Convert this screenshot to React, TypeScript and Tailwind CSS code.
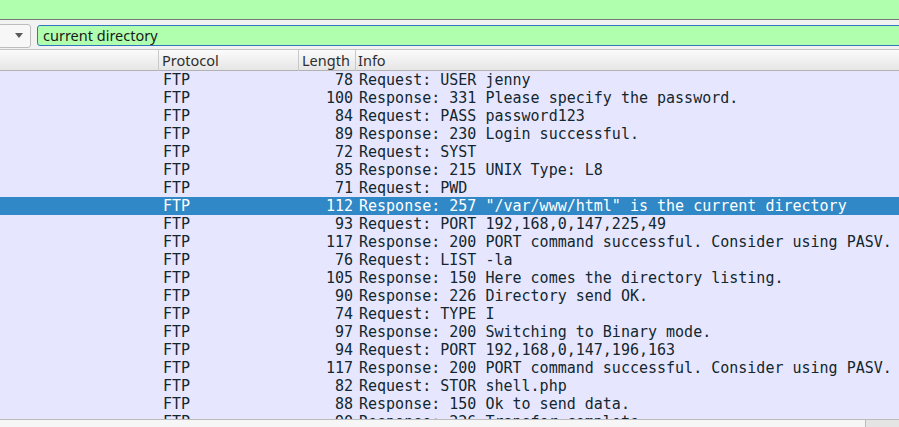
const rows = [
  { len: 78, info: "Request: USER jenny" },
  { len: 100, info: "Response: 331 Please specify the password." },
  { len: 84, info: "Request: PASS password123" },
  { len: 89, info: "Response: 230 Login successful." },
  { len: 72, info: "Request: SYST" },
  { len: 85, info: "Response: 215 UNIX Type: L8" },
  { len: 71, info: "Request: PWD" },
  { len: 112, info: 'Response: 257 "/var/www/html" is the current directory', selected: true },
  { len: 93, info: "Request: PORT 192,168,0,147,225,49" },
  { len: 117, info: "Response: 200 PORT command successful. Consider using PASV." },
  { len: 76, info: "Request: LIST -la" },
  { len: 105, info: "Response: 150 Here comes the directory listing." },
  { len: 90, info: "Response: 226 Directory send OK." },
  { len: 74, info: "Request: TYPE I" },
  { len: 97, info: "Response: 200 Switching to Binary mode." },
  { len: 94, info: "Request: PORT 192,168,0,147,196,163" },
  { len: 117, info: "Response: 200 PORT command successful. Consider using PASV." },
  { len: 82, info: "Request: STOR shell.php" },
  { len: 88, info: "Response: 150 Ok to send data." },
  { len: 90, info: "Response: 226 Transfer complete." },
];

const cols = "grid grid-cols-[158px_140px_57px_1fr]";

export default function App() {
  return (
    <div className="h-[427px] w-[899px] flex flex-col overflow-hidden bg-[#efefef] font-['Noto_Sans',sans-serif]">
      {/* green strip above */}
      <div className="h-[20px] shrink-0 bg-[#afffaf] border-b border-[#7a7a7a]" />

      {/* filter toolbar */}
      <div className="h-[30px] shrink-0 flex items-center overflow-hidden border-b border-[#c4c4c4] bg-[#f2f2f2]">
        <div className="h-[24px] w-[33px] -ml-[2px] mt-[2px] flex items-center justify-end pr-[7px] rounded-[3px] border border-[#bdbdbd] bg-[#f7f7f7]">
          <svg width="8" height="5" viewBox="0 0 8 5">
            <path d="M0 0H8L4 5Z" fill="#5a5a5a" />
          </svg>
        </div>
        <div className="ml-[6px] -mr-[4px] flex-1 h-[21px] mt-[2px] flex items-center pl-[5px] pt-[1px] rounded-[3px] border border-[#2f78bd] bg-[#afffaf] text-[14.5px] text-[#1a1a1a]">
          current directory
        </div>
      </div>

      {/* column header */}
      <div className={`${cols} h-[21px] shrink-0 border-b border-[#b2b2b2] bg-gradient-to-b from-[#fbfbfb] to-[#e6e6e6] text-[14.5px] text-[#2e2e2e] leading-[21px]`}>
        <div />
        <div className="border-l border-[#c8c8c8] pl-[3px]">Protocol</div>
        <div className="border-l border-[#c8c8c8] pl-[3px]">Length</div>
        <div className="border-l border-[#c8c8c8] pl-[2px]">Info</div>
      </div>

      {/* packet list */}
      <div className="flex-1 overflow-hidden bg-[#e7e6ff] font-['DejaVu_Sans_Mono',monospace] text-[15px] leading-[18px]">
        {rows.map((r, i) => (
          <div
            key={i}
            className={`${cols} h-[18px] whitespace-nowrap ${
              r.selected ? "bg-[#3088c6] text-white" : "text-[#12272e]"
            }`}
          >
            <div />
            <div className="pl-[5px]">FTP</div>
            <div className="text-right pr-[2px]">{r.len}</div>
            <div className="pl-[4px] overflow-hidden">{r.info}</div>
          </div>
        ))}
      </div>

      {/* bottom scroll strip */}
      <div className="h-[8px] shrink-0 flex border-t border-[#bcbcbc] bg-[#f6f6f6]">
        <div className="flex-1" />
        <div className="w-[34px] border-l border-[#bcbcbc] bg-[#e4e4e4]" />
      </div>
    </div>
  );
}
